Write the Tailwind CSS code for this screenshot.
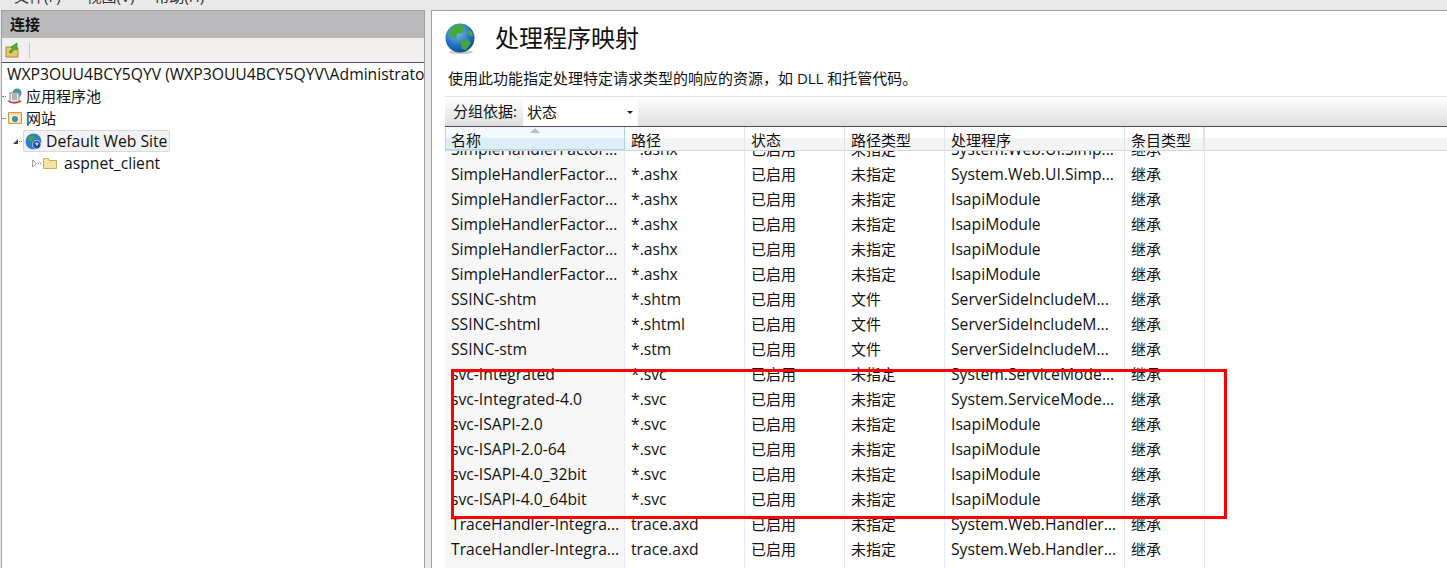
<!DOCTYPE html>
<html lang="zh-CN">
<head>
    <meta charset="UTF-8">
    <title>处理程序映射</title>
    <script src="https://cdn.jsdelivr.net/npm/@tailwindcss/browser@4"></script>
</head>
<body class="bg-[#e9e9e9] overflow-hidden font-['Open_Sans','Noto_Sans_CJK_SC',sans-serif] text-[15px] text-[#111]">
    <div class="w-[1447px] h-[568px] overflow-hidden relative">
        <!-- menu strip, cut off by the top of the picture -->
        <div class="h-[10px] overflow-hidden flex pl-[14px] text-[15px] leading-[10px] text-[#333]">
            <span class="-mt-[9px]">文件(F)</span>
            <span class="-mt-[9px] ml-[26px]">视图(V)</span>
            <span class="-mt-[9px] ml-[20px]">帮助(H)</span>
        </div>

        <div class="flex h-[558px] pl-[1px] gap-[6px]">
            <!-- connections panel -->
            <div class="w-[424px] bg-white border border-b-0 border-[#a0a0a0]">
                <div class="h-[27px] bg-[#b9b8ba] pl-[8px] text-[15px] font-bold leading-[27px]">连接</div>
                <div class="h-[25px] bg-[#f1f0ee] border-b border-[#4c4a6e] flex items-center pl-[3px] gap-[9px]">
                    <svg width="15" height="16" viewBox="0 0 15 16">
                        <path d="M1 5h5l1 1h6v9H1z" fill="#e8c56a" stroke="#a88a3c"/>
                        <path d="M4 10l4-4-2-1 6-4v7l-2-1-4 4z" fill="#4fb52e" stroke="#2a7d18" stroke-width=".6"/>
                    </svg>
                    <div class="w-[1px] h-[15px] bg-[#c9c7bd]"></div>
                </div>
                <div class="whitespace-nowrap overflow-hidden">
                    <div class="h-[22px] leading-[22px] pl-[5px] text-[15.7px]">WXP3OUU4BCY5QYV (WXP3OUU4BCY5QYV\Administrator)</div>
                    <div class="h-[22px] flex items-center">
                        <div class="w-[4px] mr-[1px] border-t border-dotted border-[#777]"></div>
                        <svg class="mr-[3px]" width="16" height="16" viewBox="0 0 16 16">
                            <circle cx="10" cy="5" r="4.500" fill="#3f8fd0"/>
                            <path d="M8 2l3 1-1 3-3-1z" fill="#4caf3c"/>
                            <rect x="3" y="5" width="9" height="9" fill="#eee" stroke="#8a8a8a"/>
                            <path d="M5 7h5M5 9h5M5 11h5" stroke="#777"/>
                            <path d="M1 13q6 4 13 0" fill="none" stroke="#d3402f" stroke-width="1.500"/>
                        </svg>
                        <span>应用程序池</span>
                    </div>
                    <div class="h-[22px] flex items-center">
                        <div class="w-[4px] mr-[1px] border-t border-dotted border-[#777]"></div>
                        <svg class="mr-[3px]" width="16" height="16" viewBox="0 0 16 16">
                            <path d="M1.500 2.500h13v11h-13z" fill="#f4dc96" stroke="#c0a060"/>
                            <path d="M3 5h10v7H3z" fill="#fbeec4"/>
                            <circle cx="8" cy="9" r="3" fill="#3a86c8"/>
                            <path d="M7 7l2 .5-.5 2-2-.5z" fill="#4caf3c"/>
                        </svg>
                        <span>网站</span>
                    </div>
                    <div class="h-[22px] mt-[1px] flex items-center pl-[10px]">
                        <svg width="7" height="7" viewBox="0 0 7 7"><path d="M6 1v5H1z" fill="#444"/></svg>
                        <div class="w-[3px] mr-[1px] border-t border-dotted border-[#777]"></div>
                        <div class="h-[22px] flex items-center gap-[4px] pl-[1px] pr-[2px] bg-[#f2f2f2] border border-[#d9d9d9] rounded-[2px] text-[15.7px]">
                            <svg width="17" height="17" viewBox="0 0 16 16">
                                <circle cx="8" cy="8" r="7.500" fill="#2f7fc8"/>
                                <path d="M4 3l4-1 1 3-3 3-3-2zM10 8l3 1-2 4-2-1z" fill="#48a83a"/>
                                <circle cx="11" cy="11" r="4" fill="#1f4f9c" stroke="#fff" stroke-width=".6"/>
                                <path d="M9.800 10q1.200-1.300 2.400 0-.2.7-1.200 1v.8" fill="none" stroke="#fff"/>
                            </svg>
                            <span class="leading-[24px]">Default Web Site</span>
                        </div>
                    </div>
                    <div class="h-[22px] flex items-center pl-[29px]">
                        <svg width="7" height="9" viewBox="0 0 7 9"><path d="M1.500 1l4 3.500-4 3.500z" fill="#fff" stroke="#999"/></svg>
                        <div class="w-[3px] mr-[1px] border-t border-dotted border-[#777]"></div>
                        <svg class="mr-[6px]" width="16" height="14" viewBox="0 0 16 14">
                            <path d="M1.500 12.500v-10h5l1 2h7v8z" fill="#f6e3a3" stroke="#c9ac66"/>
                        </svg>
                        <span class="text-[15.7px] leading-[24px]">aspnet_client</span>
                    </div>
                </div>
            </div>

            <!-- feature page -->
            <div class="flex-1 bg-white border border-b-0 border-r-0 border-[#a0a0a0] pl-[13px]">
                <div class="h-[57px] flex items-center">
                    <svg class="-mt-[1px]" width="30" height="32" viewBox="0 0 30 32">
                        <defs>
                            <radialGradient id="sea" cx=".4" cy=".3" r=".8">
                                <stop offset="0" stop-color="#7cc0ee"/>
                                <stop offset=".6" stop-color="#1f6fc0"/>
                                <stop offset="1" stop-color="#123f86"/>
                            </radialGradient>
                        </defs>
                        <ellipse cx="16" cy="29" rx="12" ry="2" fill="#ccc"/>
                        <circle cx="15" cy="15" r="14.500" fill="url(#sea)"/>
                        <path d="M7 4l9-3 4 4-3 5-5 1-1 5-5-3-3-3zM15 17l8-1 3 4-5 7-4-1zM22 6l5 3 1 5-4-2z" fill="#45a93a"/>
                    </svg>
                    <span class="ml-[20px] -mt-[3px] text-[24px] leading-none">处理程序映射</span>
                </div>
                <div class="h-[28px] pl-[3px] leading-[20px]">使用此功能指定处理特定请求类型的响应的资源，如 DLL 和托管代码。</div>
                <div class="h-[31px] flex border-t border-b border-t-[#e2e2e2] border-b-[#4c4a6e] bg-gradient-to-b from-white to-[#dfdede]">
                    <div class="w-[78px] pl-[8px] leading-[29px]">分组依据:</div>
                    <div class="w-[115px] bg-white pl-[4px] leading-[31px] flex justify-between">
                        <span>状态</span>
                        <svg class="mt-[14px] mr-[5px]" width="6" height="3" viewBox="0 0 6 3"><path d="M0 0h6L3 3z" fill="#222"/></svg>
                    </div>
                </div>

                <div class="h-[24px] relative z-10 flex leading-[26px] border-b border-[#d5d5d5] bg-gradient-to-b from-white from-50% to-[#f3f4f6] to-50%">
                    <div class="w-[180px] relative pl-[5px] border border-[#a9d6ee] border-t-0 bg-gradient-to-b from-[#f3f9fd] from-50% to-[#deeef7] to-50%">
                        名称
                        <svg class="absolute left-[84px] top-[1px]" width="10" height="5" viewBox="0 0 10 5"><path d="M0 5l5-5 5 5z" fill="#a8c4d8"/></svg>
                    </div>
                    <div class="w-[120px] pl-[6px] border-r border-[#e2e3e5]">路径</div>
                    <div class="w-[100px] pl-[6px] border-r border-[#e2e3e5]">状态</div>
                    <div class="w-[100px] pl-[6px] border-r border-[#e2e3e5]">路径类型</div>
                    <div class="w-[180px] pl-[6px] border-r border-[#e2e3e5]">处理程序</div>
                    <div class="w-[80px] pl-[6px] border-r-2 border-[#e2e3e5]">条目类型</div>
                </div>

                <div class="-mt-[15px] grid grid-cols-[180px_120px_100px_100px_180px_80px] w-[760px] auto-rows-[25px] leading-[27px] text-[15.7px] whitespace-nowrap">
                    <div class="pl-[6px] bg-[#f7f7f7] border-r border-[#e3ecf8]">SimpleHandlerFactor...</div><div class="pl-[6px] border-r border-[#e3ecf8]">*.ashx</div><div class="pl-[6px] border-r border-[#e3ecf8] text-[15px]">已启用</div><div class="pl-[6px] border-r border-[#e3ecf8] text-[15px]">未指定</div><div class="pl-[6px] border-r border-[#e3ecf8]">System.Web.UI.Simp...</div><div class="pl-[6px] border-r border-[#e3ecf8] text-[15px]">继承</div>
                    <div class="pl-[6px] bg-[#f7f7f7] border-r border-[#e3ecf8]">SimpleHandlerFactor...</div><div class="pl-[6px] border-r border-[#e3ecf8]">*.ashx</div><div class="pl-[6px] border-r border-[#e3ecf8] text-[15px]">已启用</div><div class="pl-[6px] border-r border-[#e3ecf8] text-[15px]">未指定</div><div class="pl-[6px] border-r border-[#e3ecf8]">System.Web.UI.Simp...</div><div class="pl-[6px] border-r border-[#e3ecf8] text-[15px]">继承</div>
                    <div class="pl-[6px] bg-[#f7f7f7] border-r border-[#e3ecf8]">SimpleHandlerFactor...</div><div class="pl-[6px] border-r border-[#e3ecf8]">*.ashx</div><div class="pl-[6px] border-r border-[#e3ecf8] text-[15px]">已启用</div><div class="pl-[6px] border-r border-[#e3ecf8] text-[15px]">未指定</div><div class="pl-[6px] border-r border-[#e3ecf8]">IsapiModule</div><div class="pl-[6px] border-r border-[#e3ecf8] text-[15px]">继承</div>
                    <div class="pl-[6px] bg-[#f7f7f7] border-r border-[#e3ecf8]">SimpleHandlerFactor...</div><div class="pl-[6px] border-r border-[#e3ecf8]">*.ashx</div><div class="pl-[6px] border-r border-[#e3ecf8] text-[15px]">已启用</div><div class="pl-[6px] border-r border-[#e3ecf8] text-[15px]">未指定</div><div class="pl-[6px] border-r border-[#e3ecf8]">IsapiModule</div><div class="pl-[6px] border-r border-[#e3ecf8] text-[15px]">继承</div>
                    <div class="pl-[6px] bg-[#f7f7f7] border-r border-[#e3ecf8]">SimpleHandlerFactor...</div><div class="pl-[6px] border-r border-[#e3ecf8]">*.ashx</div><div class="pl-[6px] border-r border-[#e3ecf8] text-[15px]">已启用</div><div class="pl-[6px] border-r border-[#e3ecf8] text-[15px]">未指定</div><div class="pl-[6px] border-r border-[#e3ecf8]">IsapiModule</div><div class="pl-[6px] border-r border-[#e3ecf8] text-[15px]">继承</div>
                    <div class="pl-[6px] bg-[#f7f7f7] border-r border-[#e3ecf8]">SimpleHandlerFactor...</div><div class="pl-[6px] border-r border-[#e3ecf8]">*.ashx</div><div class="pl-[6px] border-r border-[#e3ecf8] text-[15px]">已启用</div><div class="pl-[6px] border-r border-[#e3ecf8] text-[15px]">未指定</div><div class="pl-[6px] border-r border-[#e3ecf8]">IsapiModule</div><div class="pl-[6px] border-r border-[#e3ecf8] text-[15px]">继承</div>
                    <div class="pl-[6px] bg-[#f7f7f7] border-r border-[#e3ecf8]">SSINC-shtm</div><div class="pl-[6px] border-r border-[#e3ecf8]">*.shtm</div><div class="pl-[6px] border-r border-[#e3ecf8] text-[15px]">已启用</div><div class="pl-[6px] border-r border-[#e3ecf8] text-[15px]">文件</div><div class="pl-[6px] border-r border-[#e3ecf8]">ServerSideIncludeM...</div><div class="pl-[6px] border-r border-[#e3ecf8] text-[15px]">继承</div>
                    <div class="pl-[6px] bg-[#f7f7f7] border-r border-[#e3ecf8]">SSINC-shtml</div><div class="pl-[6px] border-r border-[#e3ecf8]">*.shtml</div><div class="pl-[6px] border-r border-[#e3ecf8] text-[15px]">已启用</div><div class="pl-[6px] border-r border-[#e3ecf8] text-[15px]">文件</div><div class="pl-[6px] border-r border-[#e3ecf8]">ServerSideIncludeM...</div><div class="pl-[6px] border-r border-[#e3ecf8] text-[15px]">继承</div>
                    <div class="pl-[6px] bg-[#f7f7f7] border-r border-[#e3ecf8]">SSINC-stm</div><div class="pl-[6px] border-r border-[#e3ecf8]">*.stm</div><div class="pl-[6px] border-r border-[#e3ecf8] text-[15px]">已启用</div><div class="pl-[6px] border-r border-[#e3ecf8] text-[15px]">文件</div><div class="pl-[6px] border-r border-[#e3ecf8]">ServerSideIncludeM...</div><div class="pl-[6px] border-r border-[#e3ecf8] text-[15px]">继承</div>
                    <div class="pl-[6px] bg-[#f7f7f7] border-r border-[#e3ecf8]">svc-Integrated</div><div class="pl-[6px] border-r border-[#e3ecf8]">*.svc</div><div class="pl-[6px] border-r border-[#e3ecf8] text-[15px]">已启用</div><div class="pl-[6px] border-r border-[#e3ecf8] text-[15px]">未指定</div><div class="pl-[6px] border-r border-[#e3ecf8]">System.ServiceMode...</div><div class="pl-[6px] border-r border-[#e3ecf8] text-[15px]">继承</div>
                    <div class="pl-[6px] bg-[#f7f7f7] border-r border-[#e3ecf8]">svc-Integrated-4.0</div><div class="pl-[6px] border-r border-[#e3ecf8]">*.svc</div><div class="pl-[6px] border-r border-[#e3ecf8] text-[15px]">已启用</div><div class="pl-[6px] border-r border-[#e3ecf8] text-[15px]">未指定</div><div class="pl-[6px] border-r border-[#e3ecf8]">System.ServiceMode...</div><div class="pl-[6px] border-r border-[#e3ecf8] text-[15px]">继承</div>
                    <div class="pl-[6px] bg-[#f7f7f7] border-r border-[#e3ecf8]">svc-ISAPI-2.0</div><div class="pl-[6px] border-r border-[#e3ecf8]">*.svc</div><div class="pl-[6px] border-r border-[#e3ecf8] text-[15px]">已启用</div><div class="pl-[6px] border-r border-[#e3ecf8] text-[15px]">未指定</div><div class="pl-[6px] border-r border-[#e3ecf8]">IsapiModule</div><div class="pl-[6px] border-r border-[#e3ecf8] text-[15px]">继承</div>
                    <div class="pl-[6px] bg-[#f7f7f7] border-r border-[#e3ecf8]">svc-ISAPI-2.0-64</div><div class="pl-[6px] border-r border-[#e3ecf8]">*.svc</div><div class="pl-[6px] border-r border-[#e3ecf8] text-[15px]">已启用</div><div class="pl-[6px] border-r border-[#e3ecf8] text-[15px]">未指定</div><div class="pl-[6px] border-r border-[#e3ecf8]">IsapiModule</div><div class="pl-[6px] border-r border-[#e3ecf8] text-[15px]">继承</div>
                    <div class="pl-[6px] bg-[#f7f7f7] border-r border-[#e3ecf8]">svc-ISAPI-4.0_32bit</div><div class="pl-[6px] border-r border-[#e3ecf8]">*.svc</div><div class="pl-[6px] border-r border-[#e3ecf8] text-[15px]">已启用</div><div class="pl-[6px] border-r border-[#e3ecf8] text-[15px]">未指定</div><div class="pl-[6px] border-r border-[#e3ecf8]">IsapiModule</div><div class="pl-[6px] border-r border-[#e3ecf8] text-[15px]">继承</div>
                    <div class="pl-[6px] bg-[#f7f7f7] border-r border-[#e3ecf8]">svc-ISAPI-4.0_64bit</div><div class="pl-[6px] border-r border-[#e3ecf8]">*.svc</div><div class="pl-[6px] border-r border-[#e3ecf8] text-[15px]">已启用</div><div class="pl-[6px] border-r border-[#e3ecf8] text-[15px]">未指定</div><div class="pl-[6px] border-r border-[#e3ecf8]">IsapiModule</div><div class="pl-[6px] border-r border-[#e3ecf8] text-[15px]">继承</div>
                    <div class="pl-[6px] bg-[#f7f7f7] border-r border-[#e3ecf8]">TraceHandler-Integra...</div><div class="pl-[6px] border-r border-[#e3ecf8]">trace.axd</div><div class="pl-[6px] border-r border-[#e3ecf8] text-[15px]">已启用</div><div class="pl-[6px] border-r border-[#e3ecf8] text-[15px]">未指定</div><div class="pl-[6px] border-r border-[#e3ecf8]">System.Web.Handler...</div><div class="pl-[6px] border-r border-[#e3ecf8] text-[15px]">继承</div>
                    <div class="pl-[6px] bg-[#f7f7f7] border-r border-[#e3ecf8]">TraceHandler-Integra...</div><div class="pl-[6px] border-r border-[#e3ecf8]">trace.axd</div><div class="pl-[6px] border-r border-[#e3ecf8] text-[15px]">已启用</div><div class="pl-[6px] border-r border-[#e3ecf8] text-[15px]">未指定</div><div class="pl-[6px] border-r border-[#e3ecf8]">System.Web.Handler...</div><div class="pl-[6px] border-r border-[#e3ecf8] text-[15px]">继承</div>
                    <div class="bg-[#f7f7f7] border-r border-[#e3ecf8]"></div><div class="border-r border-[#e3ecf8]"></div><div class="border-r border-[#e3ecf8]"></div><div class="border-r border-[#e3ecf8]"></div><div class="border-r border-[#e3ecf8]"></div><div class="border-r border-[#e3ecf8]"></div>
                </div>
            </div>
        </div>

        <!-- red annotation drawn over the list -->
        <div class="absolute left-[451px] top-[369px] w-[776px] h-[150px] border-[3px] border-[#ff0000]"></div>
    </div>
</body>
</html>
